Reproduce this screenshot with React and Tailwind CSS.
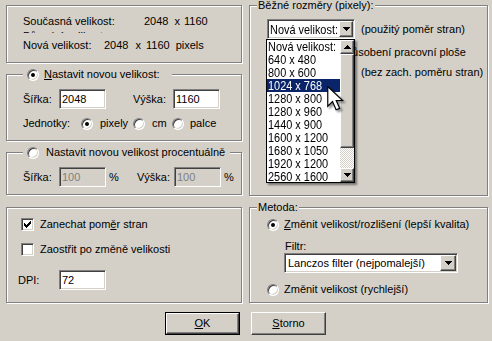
import React from 'react';

const sunken =
  "border border-t-[#808080] border-l-[#808080] border-b-white border-r-white shadow-[inset_1px_1px_#404040,inset_-1px_-1px_#d4d0c8]";
const raised =
  "bg-[#d4d0c8] border border-t-white border-l-white border-b-[#404040] border-r-[#404040] shadow-[inset_-1px_-1px_#808080]";
const etched =
  "relative border border-[#808080] shadow-[1px_1px_0_#fff,inset_1px_1px_0_#fff]";

function Narrow({ children }) {
  return (
    <span className="inline-block whitespace-nowrap origin-left scale-x-[0.84] text-[13px] leading-[13px]">
      {children}
    </span>
  );
}

function Radio({ checked }) {
  return (
    <span className="relative inline-block w-[12px] h-[12px] shrink-0 rounded-full bg-white border border-t-[#808080] border-l-[#808080] border-b-white border-r-white shadow-[inset_1px_1px_#404040,inset_-1px_-1px_#d4d0c8]">
      {checked && (
        <span className="absolute left-[3px] top-[3px] w-[4px] h-[4px] rounded-full bg-black" />
      )}
    </span>
  );
}

const checkPixels = [
  '......X',
  '.....XX',
  'X...XXX',
  'XX.XXX.',
  'XXXXX..',
  '.XXX...',
  '..X....',
];

function Check({ checked }) {
  return (
    <span className={`inline-flex w-[13px] h-[13px] shrink-0 bg-white items-center justify-center ${sunken}`}>
      {checked && (
        <svg width="7" height="7" viewBox="0 0 7 7" shapeRendering="crispEdges">
          {checkPixels.map((row, y) =>
            row.split('').map((c, x) =>
              c === 'X' ? <rect key={`${x}-${y}`} x={x} y={y} width="1" height="1" fill="#000" /> : null
            )
          )}
        </svg>
      )}
    </span>
  );
}

function DownTri() {
  return (
    <svg width="7" height="4" viewBox="0 0 7 4" shapeRendering="crispEdges">
      <rect x="0" y="0" width="7" height="1" />
      <rect x="1" y="1" width="5" height="1" />
      <rect x="2" y="2" width="3" height="1" />
      <rect x="3" y="3" width="1" height="1" />
    </svg>
  );
}

function UpTri() {
  return (
    <svg width="7" height="4" viewBox="0 0 7 4" shapeRendering="crispEdges">
      <rect x="3" y="0" width="1" height="1" />
      <rect x="2" y="1" width="3" height="1" />
      <rect x="1" y="2" width="5" height="1" />
      <rect x="0" y="3" width="7" height="1" />
    </svg>
  );
}

function Group({ className = '', title, children }) {
  return (
    <div className={`${etched} ${className}`}>
      {title}
      {children}
    </div>
  );
}

function TextInput({ value, disabled, className = '' }) {
  return (
    <div
      className={`h-[20px] p-[1px] pl-[2px] flex items-center ${sunken} ${
        disabled ? 'bg-[#d4d0c8] text-[#808080]' : 'bg-white'
      } ${className}`}
    >
      {value}
    </div>
  );
}

const sizes = [
  'Nová velikost:',
  '640 x 480',
  '800 x 600',
  '1024 x 768',
  '1280 x 800',
  '1280 x 960',
  '1440 x 900',
  '1600 x 1200',
  '1680 x 1050',
  '1920 x 1200',
  '2560 x 1600',
];

export default function App() {
  return (
    <div className="w-[492px] h-[341px] bg-[#d4d0c8] relative overflow-hidden font-['Liberation_Sans',Arial,sans-serif] text-[11px] leading-[13px] text-black">
      <div className="flex pt-[5px] pl-[6px] gap-[7px]">
        {/* LEFT COLUMN */}
        <div className="w-[236px] flex flex-col">
          {/* Group 1 */}
          <Group className="h-[58px] pt-[9px] pl-[16px]">
            <div className="flex h-[13px]">
              <span className="w-[121px]">Současná velikost:</span>
              <span>2048</span>
              <span className="ml-[6px]">x</span>
              <span className="ml-[4px]">1160</span>
            </div>
            <div className="h-[2px] overflow-hidden mt-[3px]">
              <div className="-mt-[1px]">Původní velikost:</div>
            </div>
            <div className="flex h-[13px] mt-[6px]">
              <span className="w-[81px]">Nová velikost:</span>
              <span>2048</span>
              <span className="ml-[7px]">x</span>
              <span className="ml-[5px]">1160</span>
              <span className="ml-[6px]">pixels</span>
            </div>
          </Group>

          {/* Group 2 */}
          <Group
            className="h-[67px] mt-[11px] pt-[14px]"
            title={
              <div className="absolute left-[16px] top-[-7px] h-[13px] w-[149px] bg-[#d4d0c8] pl-[4px] flex items-center gap-[5px]">
                <Radio checked />
                <span>
                  <span className="underline underline-offset-[1px]">N</span>astavit novou velikost:
                </span>
              </div>
            }
          >
            <div className="flex items-center h-[20px] pl-[16px]">
              <span className="w-[36px]">Šířka:</span>
              <TextInput value="2048" className="w-[47px]" />
              <span className="ml-[27px] w-[40px]">Výška:</span>
              <TextInput value="1160" className="w-[47px]" />
            </div>
            <div className="flex items-center h-[13px] mt-[8px] pl-[16px]">
              <span className="w-[58px]">Jednotky:</span>
              <Radio checked />
              <span className="ml-[7px] w-[33px]">pixely</span>
              <Radio />
              <span className="ml-[7px] w-[20px]">cm</span>
              <Radio />
              <span className="ml-[6px]">palce</span>
            </div>
          </Group>

          {/* Group 3 */}
          <Group
            className="h-[43px] mt-[11px] pt-[14px]"
            title={
              <div className="absolute left-[16px] top-[-7px] h-[13px] w-[207px] bg-[#d4d0c8] pl-[4px] flex items-center gap-[7px]">
                <Radio />
                <span>Nastavit novou velikost procentuálně</span>
              </div>
            }
          >
            <div className="flex items-center h-[20px] pl-[16px]">
              <span className="w-[36px]">Šířka:</span>
              <TextInput value="100" disabled className="w-[47px]" />
              <span className="ml-[3px] w-[28px]">%</span>
              <span className="w-[37px]">Výška:</span>
              <TextInput value="100" disabled className="w-[47px]" />
              <span className="ml-[3px]">%</span>
            </div>
          </Group>

          {/* Group 4 */}
          <Group className="h-[96px] mt-[12px] pt-[10px]">
            <div className="flex items-center h-[13px] ml-[14px] gap-[6px]">
              <Check checked />
              <span>
                Zanechat pom<span className="underline underline-offset-[1px]">ě</span>r stran
              </span>
            </div>
            <div className="flex items-center h-[13px] ml-[14px] mt-[12px] gap-[6px]">
              <Check />
              <span>Zaostřit po změně velikosti</span>
            </div>
            <div className="flex items-center h-[20px] ml-[11px] mt-[14px]">
              <span className="w-[41px]">DPI:</span>
              <TextInput value="72" className="w-[47px]" />
            </div>
          </Group>
        </div>

        {/* RIGHT COLUMN */}
        <div className="w-[239px] flex flex-col">
          <Group
            className="h-[191px] pt-[13px]"
            title={
              <div className="absolute left-[7px] top-[-7px] h-[13px] bg-[#d4d0c8] px-[1px] flex items-center">
                Běžné rozměry (pixely):
              </div>
            }
          >
            <div className="flex items-center ml-[17px]">
              <div className={`w-[88px] h-[20px] bg-white p-[1px] flex ${sunken}`}>
                <div className="flex-1 pl-[1px] flex items-center overflow-hidden">
                  <Narrow>Nová velikost:</Narrow>
                </div>
                <div className={`w-[14px] flex items-center justify-center ${raised}`}>
                  <DownTri />
                </div>
              </div>
              <span className="ml-[6px]">(použitý poměr stran)</span>
            </div>
            <div className="h-[13px] mt-[7px] ml-[77px]">Přizpůsobení pracovní ploše</div>
            <div className="h-[13px] mt-[7px] ml-[111px]">(bez zach. poměru stran)</div>
          </Group>

          <Group
            className="h-[96px] mt-[11px] pt-[10px]"
            title={
              <div className="absolute left-[7px] top-[-7px] h-[13px] bg-[#d4d0c8] px-[1px] flex items-center">
                Metoda:
              </div>
            }
          >
            <div className="flex items-center h-[13px] ml-[17px] gap-[5px]">
              <Radio checked />
              <span>
                <span className="underline underline-offset-[1px]">Z</span>měnit velikost/rozlišení (lepší kvalita)
              </span>
            </div>
            <div className="h-[13px] mt-[9px] ml-[35px]">Filtr:</div>
            <div className={`w-[174px] h-[20px] ml-[34px] bg-white p-[1px] flex ${sunken}`}>
              <div className="flex-1 pl-[2px] flex items-center">Lanczos filter (nejpomalejší)</div>
              <div className={`w-[16px] flex items-center justify-center ${raised}`}>
                <DownTri />
              </div>
            </div>
            <div className="flex items-center h-[13px] ml-[17px] mt-[10px] gap-[5px]">
              <Radio />
              <span>Změnit velikost (rychlejší)</span>
            </div>
          </Group>
        </div>
      </div>

      {/* Buttons */}
      <div className="flex pl-[165px] mt-[9px] gap-[11px]">
        <div className="w-[75px] h-[23px] border border-black">
          <div className={`w-full h-full flex items-center justify-center ${raised}`}>
            <span>
              <span className="underline underline-offset-[1px]">O</span>K
            </span>
          </div>
        </div>
        <div className={`w-[75px] h-[23px] flex items-center justify-center ${raised}`}>
          <span>
            <span className="underline underline-offset-[1px]">S</span>torno
          </span>
        </div>
      </div>

      {/* Dropdown list overlay */}
      <div className="absolute left-[266px] top-[39px] w-[89px] h-[144px] border border-black bg-white flex shadow-[2px_2px_2px_rgba(0,0,0,0.45)]">
        <div className="flex-1 flex flex-col overflow-hidden">
          {sizes.map((s, i) => (
            <div
              key={s}
              className={`h-[13px] leading-[13px] pl-[1px] whitespace-nowrap ${
                i === 3 ? 'bg-[#0a246a] text-white' : ''
              }`}
            >
              <Narrow>{s}</Narrow>
            </div>
          ))}
        </div>
        <div className="w-[14px] flex flex-col">
          <div className={`h-[14px] flex items-center justify-center ${raised}`}>
            <UpTri />
          </div>
          <div className={`h-[94px] ${raised}`} />
          <div className="flex-1 bg-[repeating-conic-gradient(#ffffff_0_25%,#d4d0c8_0_50%)] bg-size-[2px_2px]" />
          <div className={`h-[14px] flex items-center justify-center ${raised}`}>
            <DownTri />
          </div>
        </div>
      </div>

      {/* Mouse cursor */}
      <svg
        className="absolute left-[327px] top-[86px] drop-shadow-[2px_2px_1px_rgba(0,0,0,0.45)]"
        width="17"
        height="25"
        viewBox="0 0 14 21"
      >
        <path
          d="M0.5 0.5 L0.5 17 L4.5 13 L7.5 20 L10.5 18.8 L7.6 12.2 L13 12.2 Z"
          fill="#fff"
          stroke="#000"
          strokeWidth="1"
          strokeLinejoin="miter"
        />
      </svg>
    </div>
  );
}
